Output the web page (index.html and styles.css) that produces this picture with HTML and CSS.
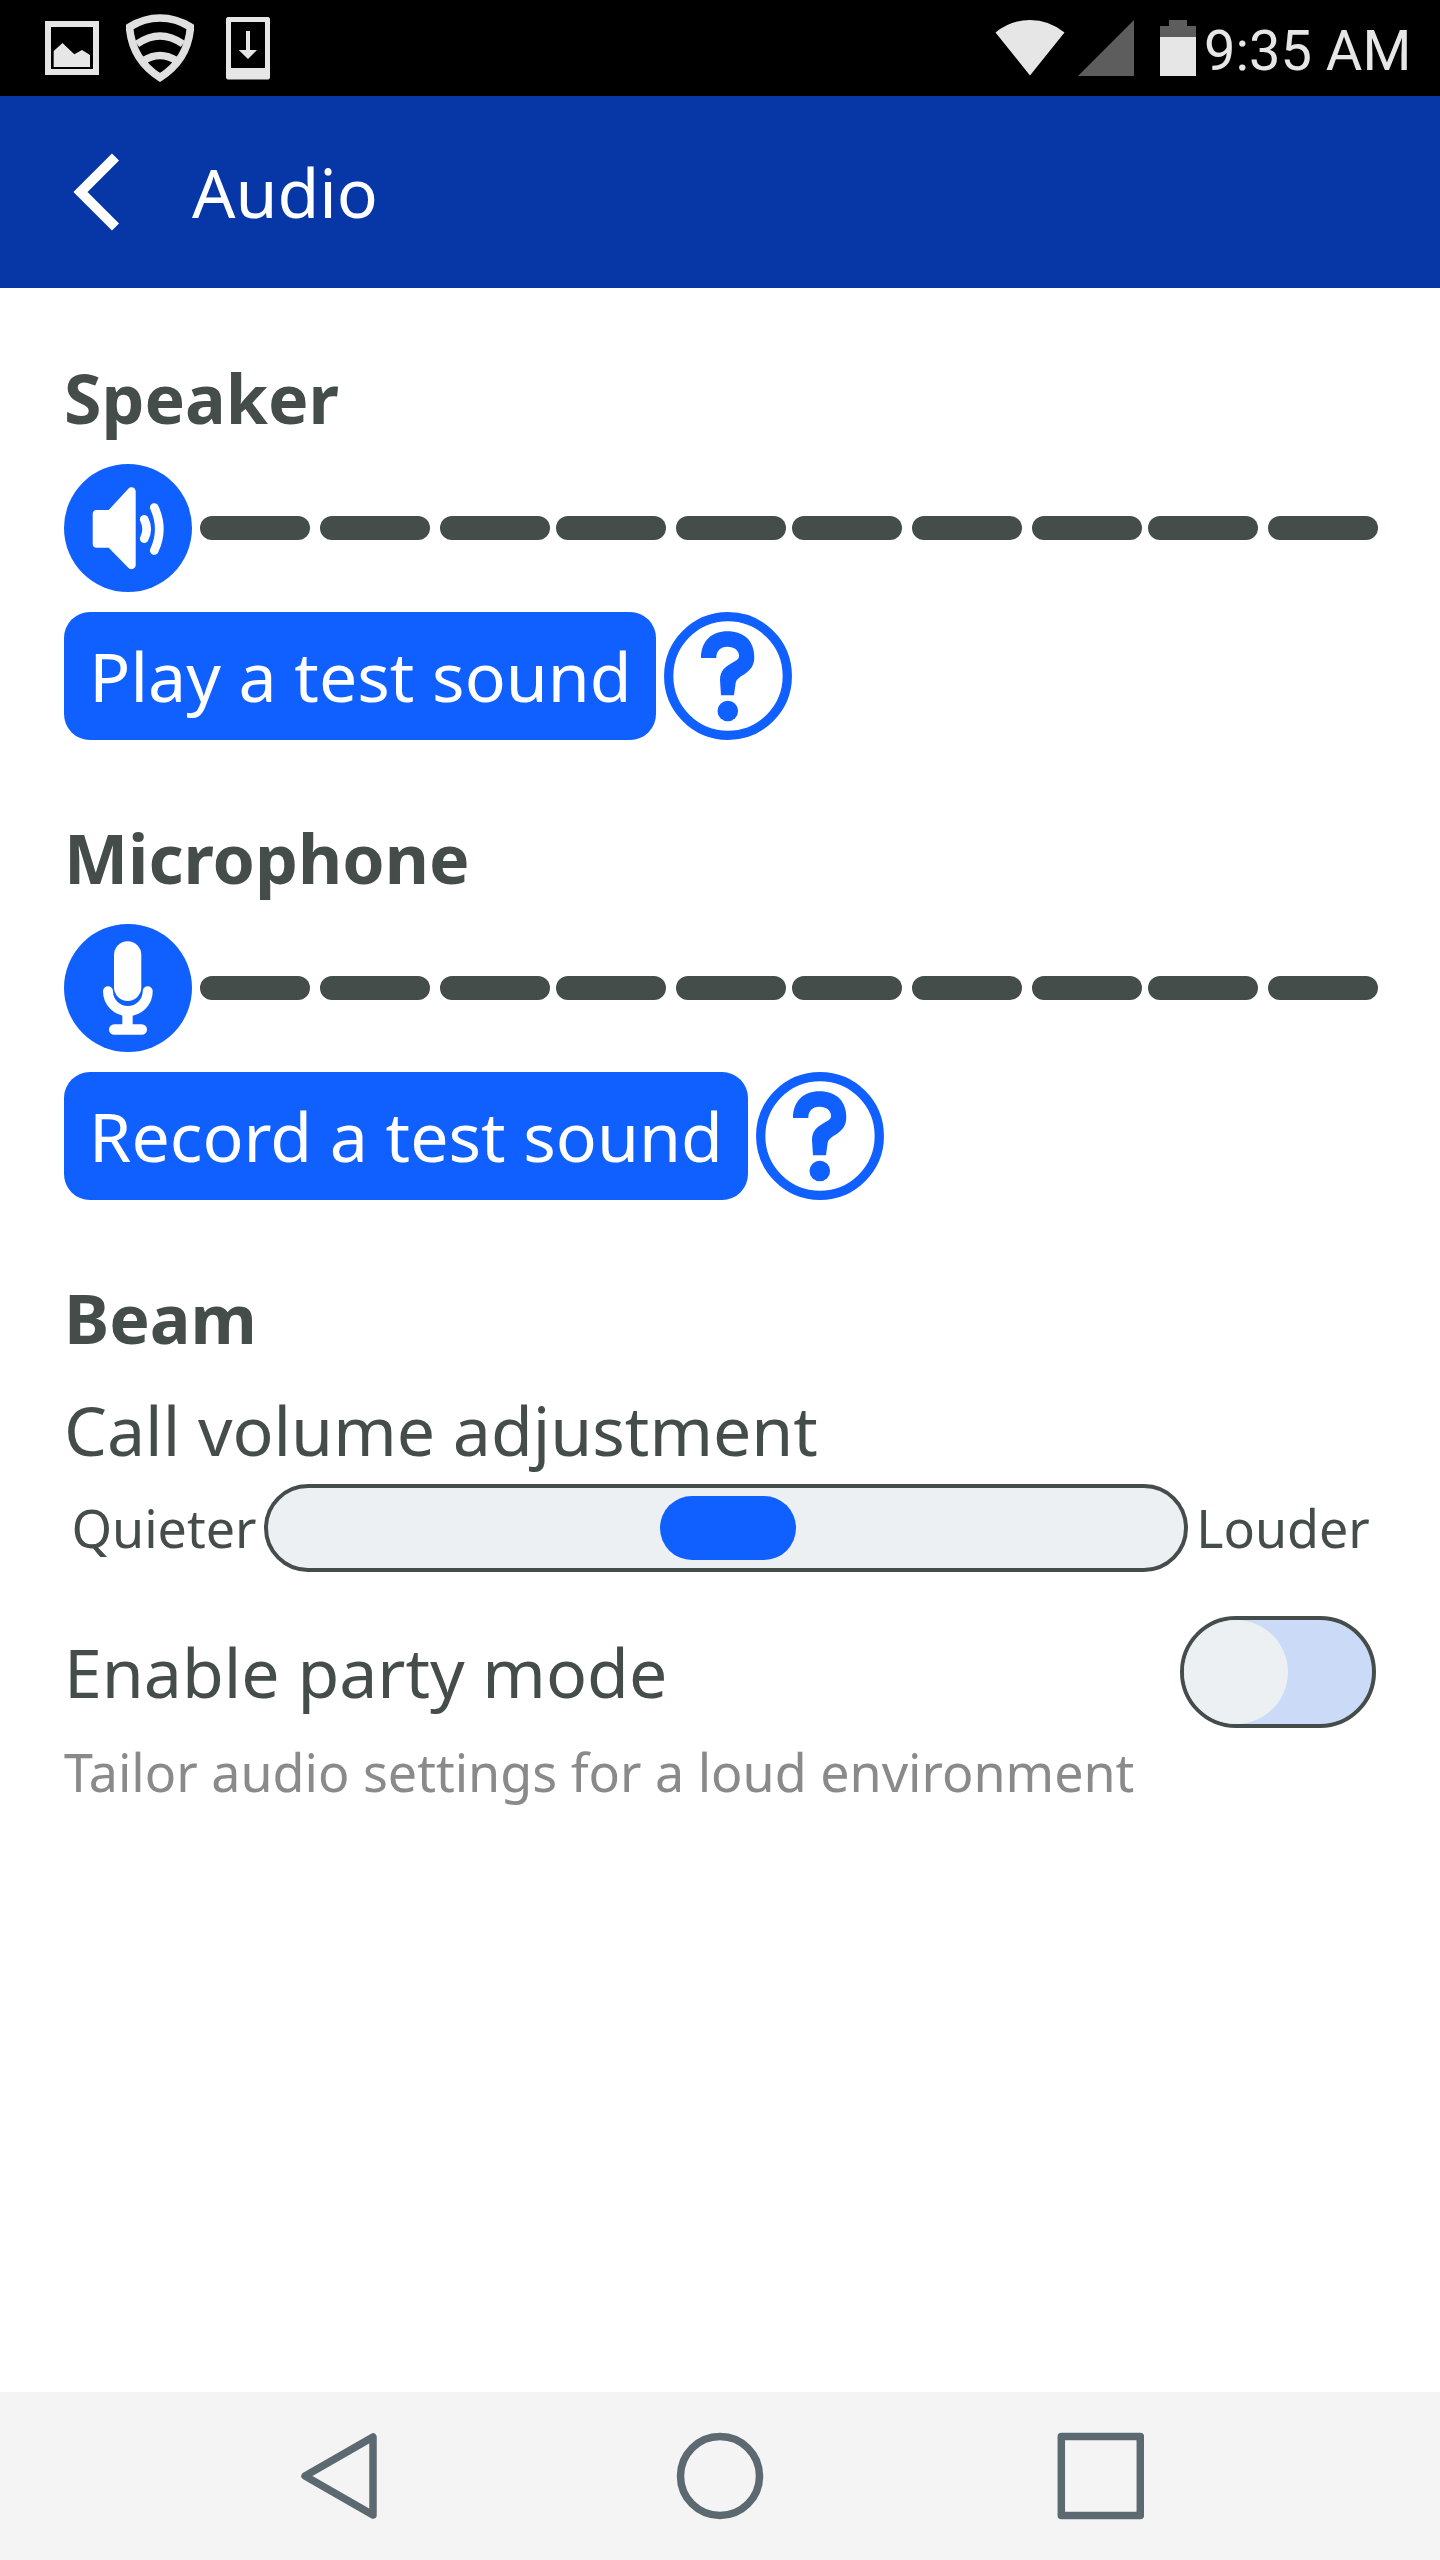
FILE: index.html
```html
<!DOCTYPE html>
<html lang="en">
<head>
<meta charset="utf-8">
<title>Audio</title>
<link rel="stylesheet" href="styles.css">
</head>
<body>
<div class="screen">
  <div class="status-bar">
    <div class="status-left">
      <svg class="icon-picture" width="54" height="54" viewBox="0 0 54 54">
        <path d="M0 0H54V54H0ZM6 6V48H48V6Z" fill-rule="evenodd" fill="#e6e6e6"/>
        <path d="M8.700 46V30L17.500 22L29.300 33.300L37 29L45 34V46Z" fill="#e6e6e6"/>
      </svg>
      <svg class="icon-shield" width="68" height="68" viewBox="0 0 68 68" fill="none" stroke="#e0e0e0" stroke-width="7.600">
        <path d="M3.500 13Q18 4 34 4T64.500 13Q62 46 34 63.500Q6 46 3.500 13Z"/>
        <path d="M11 30Q34 14 57 30"/>
        <path d="M17 47Q34 36 51 47"/>
      </svg>
      <svg class="icon-download" width="44" height="63" viewBox="0 0 44 63">
        <path d="M1.500 0H42.500L44 1.500V61L42.500 62.500H1.500L0 61V1.500ZM5 5V51H39V5Z" fill-rule="evenodd" fill="#e6e6e6"/>
        <path d="M20 14H24V33H31L22 42L12.700 33H20Z" fill="#e6e6e6"/>
      </svg>
    </div>
    <div class="status-right">
      <svg class="icon-wifi" width="70" height="56" viewBox="0 0 70 56">
        <path d="M.500 12.500Q16 0 35 0T69.500 12.500L35 55.500Z" fill="#e6e6e6"/>
      </svg>
      <svg class="icon-signal" width="56" height="56" viewBox="0 0 56 56">
        <path d="M56 0V56H0Z" fill="#5d5d5d"/>
      </svg>
      <svg class="icon-battery" width="36" height="56" viewBox="0 0 36 56">
        <path d="M9 0H27V6H36V17H0V6H9Z" fill="#5d5d5d"/>
        <path d="M0 17H36V56H0Z" fill="#e6e6e6"/>
      </svg>
      <span class="clock">9:35 AM</span>
    </div>
  </div>

  <header class="app-bar">
    <svg class="back" width="48" height="78" viewBox="0 0 48 78">
      <path d="M43.500 4L8.500 39L43.500 74" fill="none" stroke="#fff" stroke-width="10"/>
    </svg>
    <h1 class="title">Audio</h1>
  </header>

  <main class="content">
    <section class="section">
      <h2 class="heading">Speaker</h2>
      <div class="level">
        <svg width="128" height="128" viewBox="0 0 128 128">
          <circle cx="64" cy="64" r="64" fill="#105fff"/>
          <path d="M32.700 46H44.700L64.300 24.700C67 22 71.700 23.500 71.700 27.500V101C71.700 105 67 106.500 64.300 103.700L44.700 83.700H32.700Q28.700 83.700 28.700 79.700V50Q28.700 46 32.700 46Z" fill="#fff"/>
          <g fill="none" stroke="#fff" stroke-width="8.700" stroke-linecap="round">
            <path d="M80.200 55.300Q85.200 65 80.200 74.700"/>
            <path d="M90.300 43.500Q100.300 65 90.300 86.500"/>
          </g>
        </svg>
        <div class="bars"><i></i><i></i><i></i><i></i><i></i><i></i><i></i><i></i><i></i><i></i></div>
      </div>
      <div class="actions">
        <button class="button play">Play a test sound</button>
        <svg width="128" height="128" viewBox="0 0 128 128"><use href="#help"/></svg>
      </div>
    </section>

    <section class="section">
      <h2 class="heading">Microphone</h2>
      <div class="level">
        <svg width="128" height="128" viewBox="0 0 128 128">
          <circle cx="64" cy="64" r="64" fill="#105fff"/>
          <rect x="50" y="17.300" width="27.300" height="59.700" rx="13.650" fill="#fff"/>
          <path d="M44 67.300C44 78.500 53 87 63.850 87S83.700 78.500 83.700 67.300" fill="none" stroke="#fff" stroke-width="10" stroke-linecap="round"/>
          <path d="M58.300 88H68.700V102H58.300Z" fill="#fff"/>
          <rect x="45" y="100.300" width="38" height="10.500" rx="5.250" fill="#fff"/>
        </svg>
        <div class="bars"><i></i><i></i><i></i><i></i><i></i><i></i><i></i><i></i><i></i><i></i></div>
      </div>
      <div class="actions">
        <button class="button record">Record a test sound</button>
        <svg width="128" height="128" viewBox="0 0 128 128">
          <g id="help">
            <circle cx="64" cy="64" r="59.300" fill="none" stroke="#105fff" stroke-width="9.300"/>
            <path d="M37 46C37 29 48 19.300 63.300 19.300C80 19.300 90.300 29 90.300 45C90.300 54 86 58.500 80 62.500C75 65.500 72 67.500 71.500 72L70 83.300H57L56 68C56 58 62 54.500 67 51.500C72 48.500 75 47.500 75 44C75 38.500 70.500 34.700 63.300 34.700C56.500 34.700 52.300 39 52.300 46Z" fill="#105fff"/>
            <circle cx="63.800" cy="99" r="10.300" fill="#105fff"/>
          </g>
        </svg>
      </div>
    </section>

    <section class="section">
      <h2 class="heading">Beam</h2>
      <div class="label">Call volume adjustment</div>
      <div class="volume">
        <span class="volume-end quieter">Quieter</span>
        <div class="slider"><div class="thumb"></div></div>
        <span class="volume-end louder">Louder</span>
      </div>
      <div class="party">
        <span class="label">Enable party mode</span>
        <div class="toggle"><div class="knob"></div></div>
      </div>
      <p class="note">Tailor audio settings for a loud environment</p>
    </section>
  </main>

  <nav class="nav-bar">
    <svg width="88" height="88" viewBox="0 0 88 88"><path d="M77 5V83L9 44Z"/></svg>
    <svg width="88" height="88" viewBox="0 0 88 88"><circle cx="44" cy="44" r="39.500"/></svg>
    <svg width="88" height="88" viewBox="0 0 88 88"><rect x="5.300" y="4.500" width="79" height="79"/></svg>
  </nav>
</div>
</body>
</html>
```
FILE: styles.css
```css
* { box-sizing: border-box; }
body { margin: 0; background: #fff; }
svg { display: block; flex: none; }

.screen {
  width: 1440px;
  height: 2560px;
  display: flex;
  flex-direction: column;
  font-family: "Noto Sans", sans-serif;
  font-size: 68px;
  line-height: 92px;
  color: #454d4b;
  white-space: nowrap;
  overflow: hidden;
}

.status-bar {
  height: 96px;
  flex: none;
  background: #000;
  display: flex;
  justify-content: space-between;
  padding: 0 31px 0 45px;
}
.status-left, .status-right { display: flex; align-items: center; }
.icon-shield { margin-left: 27px; }
.icon-download { margin-left: 32px; }
.icon-signal { margin: 0 26px 0 13px; }
.icon-wifi, .icon-signal, .icon-battery { align-self: flex-start; margin-top: 20px; }
.clock {
  width: 205px;
  margin-left: 8px;
  padding-top: 5px;
  font-family: Roboto, sans-serif;
  font-size: 56px;
  line-height: 92px;
  color: #e6e6e6;
}

.app-bar {
  height: 192px;
  flex: none;
  background: #0737a7;
  color: #fff;
  display: flex;
  align-items: center;
  padding-left: 72px;
  gap: 72px;
}
.title { margin: 0; font-size: 68px; font-weight: 400; }

.content {
  flex: 1;
  padding: 64px 62px 0 64px;
  display: flex;
  flex-direction: column;
  gap: 72px;
}
.heading { margin: 0 0 20px; font-size: 68px; font-weight: 700; }
.level { display: flex; align-items: center; gap: 8px; margin-bottom: 20px; }
.bars { display: flex; gap: 10px; }
.bars i { width: 110px; height: 24px; border-radius: 12px; background: #454d4b; }
.bars i:nth-child(4), .bars i:nth-child(6), .bars i:nth-child(9) { margin-left: -4px; }

.actions { display: flex; gap: 8px; }
.button {
  height: 128px;
  border: 0;
  border-radius: 26px;
  padding: 0;
  background: #105fff;
  color: #fff;
  font: inherit;
}
.play { width: 592px; padding-left: 1px; }
.record { width: 684px; }

.volume { display: flex; align-items: center; margin-top: 8px; }
.volume-end { text-align: center; font-size: 52px; line-height: 88px; }
.quieter { width: 200px; }
.louder { width: 190px; }
.slider {
  width: 924px;
  height: 88px;
  border: 4px solid #454d4b;
  border-radius: 44px;
  background: #ecf0f3;
  display: flex;
  align-items: center;
  justify-content: center;
}
.thumb { width: 136px; height: 64px; margin-left: 4px; border-radius: 32px; background: #105fff; }

.party { display: flex; align-items: center; justify-content: space-between; margin-top: 44px; padding-right: 2px; }
.toggle {
  width: 196px;
  height: 112px;
  border: 4px solid #454d4b;
  border-radius: 56px;
  background: #cadaf7;
}
.knob { width: 104px; height: 104px; border-radius: 50%; background: #ecf0f3; }
.note { margin: 8px 0 0; font-size: 52px; line-height: 72px; color: #8a8a8a; }

.nav-bar {
  height: 168px;
  flex: none;
  background: #f4f4f4;
  display: flex;
  align-items: center;
  justify-content: center;
  gap: 292px;
}
.nav-bar svg { fill: none; stroke: #5c6970; stroke-width: 7.500px; stroke-linejoin: round; }
```
